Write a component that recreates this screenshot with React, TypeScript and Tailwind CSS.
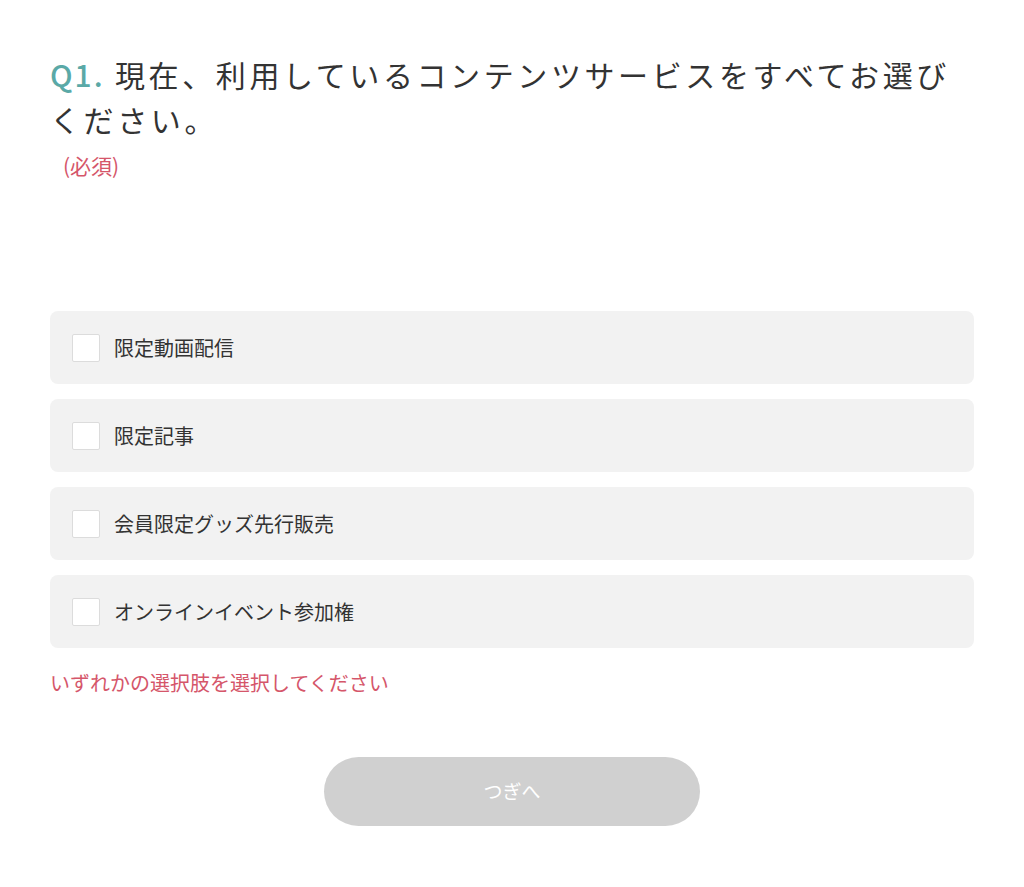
import React, { useState } from 'react';

const options = ['限定動画配信', '限定記事', '会員限定グッズ先行販売', 'オンラインイベント参加権'];

export default function App() {
  const [checked, setChecked] = useState<boolean[]>(options.map(() => false));
  const anyChecked = checked.some(Boolean);

  const toggle = (i: number) => {
    setChecked((prev) => prev.map((v, idx) => (idx === i ? !v : v)));
  };

  return (
    <div
      className="min-h-[887px] bg-white px-[50px] pt-[52px] text-[#333]"
      style={{ fontFamily: '"Noto Sans CJK JP", "Noto Sans", sans-serif' }}
    >
      <h1 className="text-[30px] font-normal leading-[45px] tracking-[3.6px] text-[#333]">
        <span className="text-[#5aa9a7] font-medium tracking-[2px]">Q1.</span> 現在、利用しているコンテンツサービスをすべてお選びください。
      </h1>
      <p className="ml-[13px] mt-[9px] text-[21px] leading-[28px] text-[#d5566a]">(必須)</p>

      <div className="mt-[132px] flex flex-col gap-[15px]">
        {options.map((label, i) => (
          <label
            key={label}
            className="flex h-[73px] cursor-pointer items-center gap-[14px] rounded-[8px] bg-[#f2f2f2] pl-[22px]"
          >
            <input
              type="checkbox"
              checked={checked[i]}
              onChange={() => toggle(i)}
              className="h-[28px] w-[28px] appearance-none rounded-[2px] border border-[#dcdcdc] bg-white checked:bg-[#5aa9a7] checked:border-[#5aa9a7]"
            />
            <span className="text-[20px] leading-[28px] text-[#333]">{label}</span>
          </label>
        ))}
      </div>

      {!anyChecked && (
        <p className="mt-[21px] text-[20px] leading-[28px] text-[#d5566a]">いずれかの選択肢を選択してください</p>
      )}

      <div className="mt-[60px] flex justify-center">
        <button
          type="button"
          disabled={!anyChecked}
          className={`h-[69px] w-[376px] rounded-full text-[19px] text-white ${
            anyChecked ? 'bg-[#5aa9a7]' : 'bg-[#d0d0d0]'
          }`}
        >
          つぎへ
        </button>
      </div>
    </div>
  );
}
